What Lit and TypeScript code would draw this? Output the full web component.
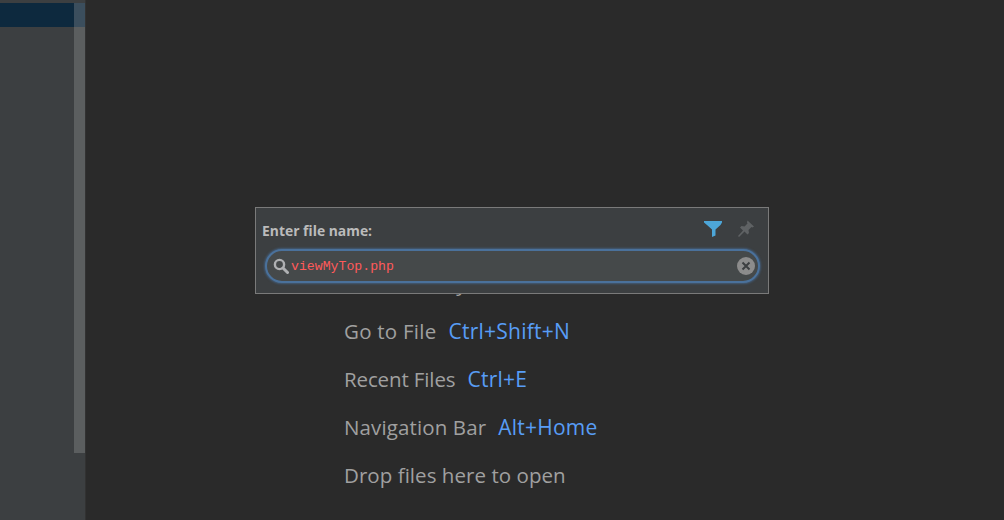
import { LitElement, html, css } from "lit";
import { customElement } from "lit/decorators.js";

@customElement("app-root")
export class AppRoot extends LitElement {
  static styles = css`
    :host { display: block; width: 1004px; height: 520px; overflow: hidden; }
    .page { display: flex; width: 1004px; height: 520px; background: #2a2a2a; position: relative; overflow: hidden; }
    .side { width: 85px; flex: none; background: #3c3f41; border-right: 1px solid #323232; position: relative; padding-top: 3px; }
    .sel { height: 24px; background: #0d293e; }
    .thumb { position: absolute; left: 74px; top: 3px; width: 11px; height: 450px; background: rgba(166,166,166,0.3); }
    .main { flex: 1; padding: 268px 0 0 258px; font-family: "Open Sans", "Noto Sans", sans-serif; font-size: 20.5px; letter-spacing: 0.05px; color: #a0a0a0; }
    .row { height: 48px; line-height: 30px; white-space: nowrap; display: flex; align-items: baseline; gap: 12px; }
    .go { letter-spacing: 0.25px; }
    .recent { letter-spacing: -0.12px; }
    .nav { letter-spacing: 0.12px; }
    .key { color: #589df6; font-size: 21px; letter-spacing: 0.25px; }
    .pop { position: absolute; left: 255px; top: 207px; width: 514px; height: 87px; box-sizing: border-box; background: #3c3f41; border: 1px solid #7a7a7a; display: flex; flex-direction: column; padding: 0 13px 0 6px; }
    .head { height: 40px; flex: none; display: flex; align-items: center; font: bold 13.9px "Open Sans", sans-serif; color: #bbbbbb; padding-top: 5px; box-sizing: border-box; }
    .label { flex: 1; }
    .head svg { display: block; }
    .funnel { margin-right: 15px; margin-top: -3px; }
    .pin { margin-top: -3px; }
    .field { margin: 1px 0 0 3px; width: 495px; height: 34px; flex: none; box-sizing: border-box; border: 2px solid #4a719b; box-shadow: 0 0 2px 1px rgba(70,110,155,0.6); border-radius: 17px; background: #45494a; display: flex; align-items: center; padding: 0 3px 0 6px; }
    .field .txt { flex: 1; margin-left: 2px; padding-top: 1px; font: 13.2px "Liberation Mono", monospace; color: #ff5a5a; }
    .field svg { display: block; }
  `;

  render() {
    return html`<div class="page">
      <div class="side"><div class="sel"></div><div class="thumb"></div></div>
      <div class="main">
        <div class="row"><span>Search Everywhere</span><span class="key">Double Shift</span></div>
        <div class="row"><span class="go">Go to File</span><span class="key">Ctrl+Shift+N</span></div>
        <div class="row"><span class="recent">Recent Files</span><span class="key">Ctrl+E</span></div>
        <div class="row"><span class="nav">Navigation Bar</span><span class="key">Alt+Home</span></div>
        <div class="row"><span>Drop files here to open</span></div>
      </div>
      <div class="pop">
        <div class="head">
          <span class="label">Enter file name:</span>
          <svg class="funnel" width="18" height="16" viewBox="0 0 18 16"><path d="M0 0h18v1.5l-1.5 2.5-5 4.5v6l-3.5 1.5v-7.5l-5-4.5-3-2.5z" fill="#4da6d8"/></svg>
          <svg class="pin" width="18" height="18" viewBox="0 0 18 18"><path d="M10.5 0.5l6.5 6-1.5 1-1-.5-3 3 .5 3-1.5 1.5-3-3-5.5 5.5-1-1 5-5.5-3-3 1.5-1.5 3 .5 3-3-.5-1z" fill="#5f6264"/></svg>
        </div>
        <div class="field">
          <svg width="16" height="16" viewBox="0 0 16 16"><circle cx="6.5" cy="6.5" r="4.6" fill="none" stroke="#afb1b3" stroke-width="2.4"/><path d="M10 10l4.5 4.5" stroke="#afb1b3" stroke-width="3" stroke-linecap="round"/></svg>
          <span class="txt">viewMyTop.php</span>
          <svg width="18" height="18" viewBox="0 0 18 18"><circle cx="9" cy="9" r="9" fill="#8c8c8c"/><path d="M5.5 5.5l7 7M12.5 5.5l-7 7" stroke="#3c3f41" stroke-width="2"/></svg>
        </div>
      </div>
    </div>`;
  }
}
